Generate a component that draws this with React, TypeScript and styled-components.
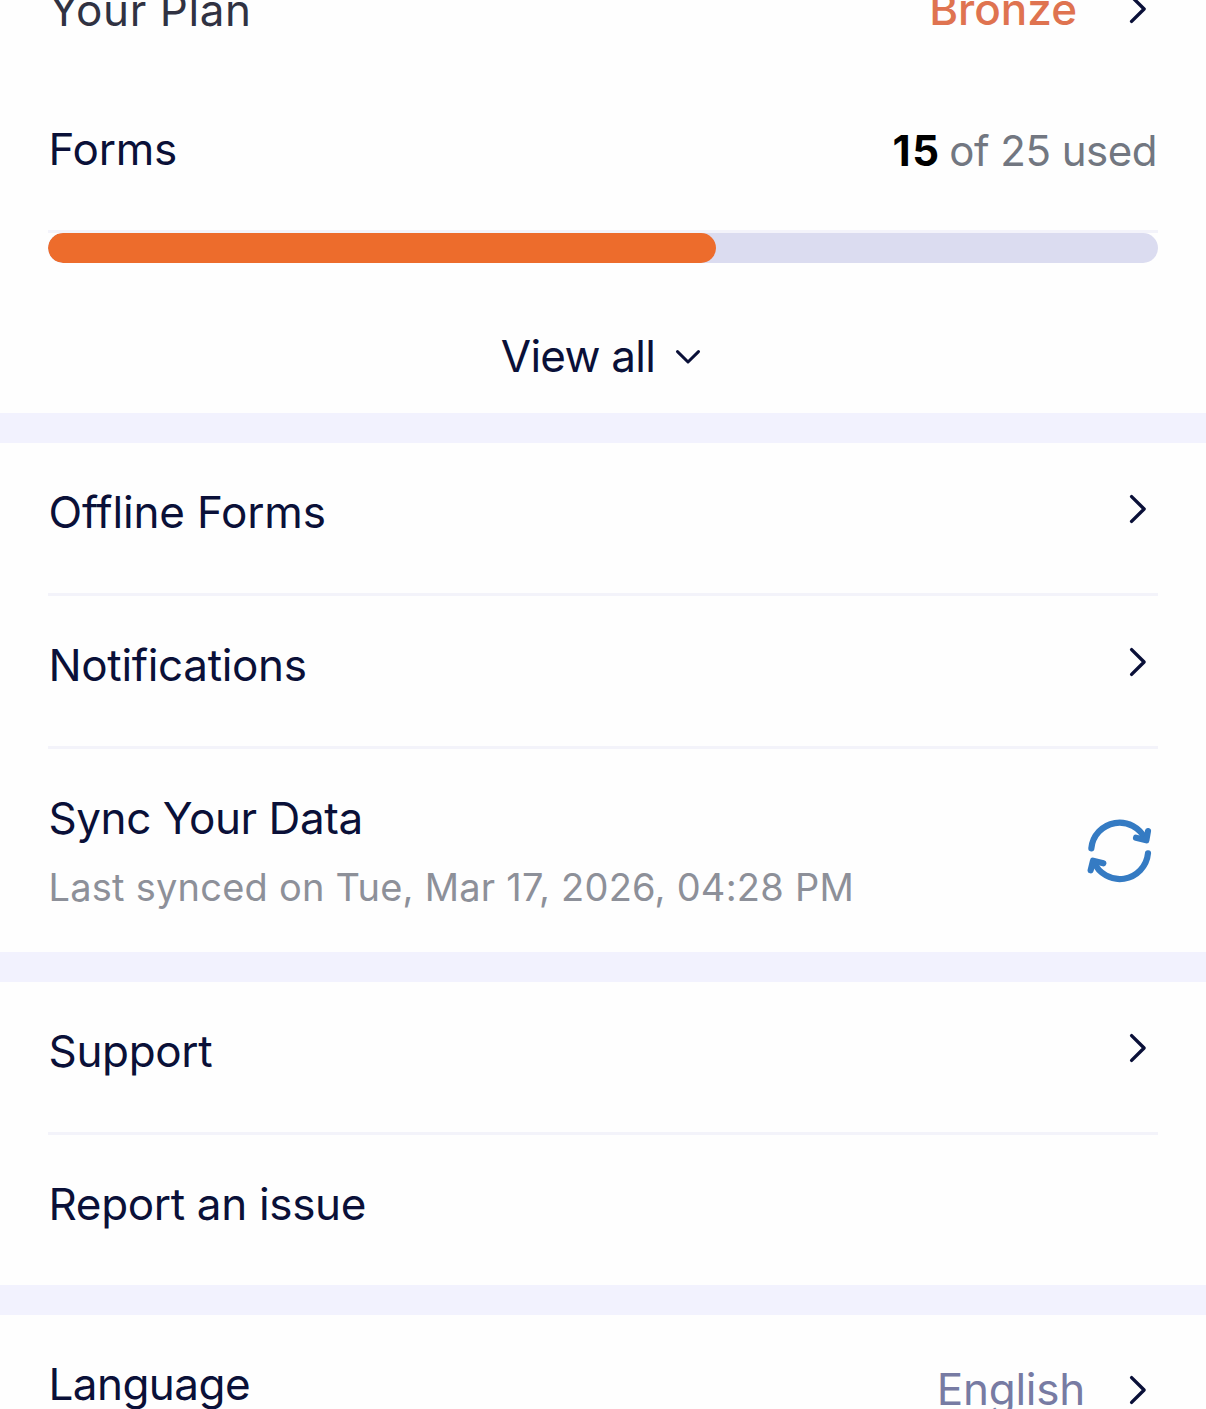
import React from "react";
import styled, { createGlobalStyle } from "styled-components";

const GlobalStyle = createGlobalStyle`
  * { box-sizing: border-box; }
  html, body { margin: 0; background: #fefefe; overflow: hidden; }
`;

const Page = styled.main`
  display: flex;
  flex-direction: column;
  width: 1206px;
  height: 1409px;
  overflow: hidden;
  background: #fefefe;
  font-family: Inter, "Liberation Sans", sans-serif;
  color: #0a1038;
`;

const Section = styled.section`
  flex: none;
  padding: 0 48px;
`;

const Band = styled.div`
  flex: none;
  height: 30px;
  background: #f2f2fe;
`;

const Divider = styled.hr`
  height: 3px;
  margin: 0;
  border: 0;
  background: #f3f3fa;
`;

const Row = styled.div`
  display: flex;
  align-items: center;
  justify-content: space-between;
  height: 150px;
  padding: 0 0 12px 0.5px;
`;

const PlanRow = styled(Row)`
  align-items: flex-start;
  height: 80px;
  padding: 0 0 0 1px;
`;

const SyncRow = styled(Row)`
  height: 203px;
  padding: 42px 6.5px 42px 0.5px;
`;

const Label = styled.span<{ $spacing?: number; $color?: string }>`
  display: block;
  font-size: 44px;
  line-height: 54px;
  letter-spacing: ${(p) => p.$spacing ?? -0.33}px;
  color: ${(p) => p.$color ?? "inherit"};
  white-space: nowrap;
`;

const PlanLabel = styled(Label)`
  margin-top: -17px;
`;

const Caption = styled.span`
  display: block;
  margin-top: 18px;
  font-size: 38px;
  line-height: 48px;
  letter-spacing: 0.23px;
  color: #8d9099;
  white-space: nowrap;
`;

const Trailing = styled.div<{ $gap?: number; $top?: number }>`
  display: flex;
  align-items: center;
  gap: ${(p) => p.$gap ?? 0}px;
  margin-top: ${(p) => p.$top ?? 0}px;
  padding-right: 11px;
`;

const Value = styled(Label)<{ $weight?: number; $lift?: number }>`
  font-weight: ${(p) => p.$weight ?? 400};
  margin-top: -${(p) => p.$lift ?? 0}px;
`;

const Usage = styled.span`
  padding: 3px 1px 0 0;
  font-size: 42px;
  line-height: 54px;
  letter-spacing: -0.5px;
  color: #727781;
  white-space: nowrap;
`;

const Used = styled.strong`
  margin-right: -3px;
  font-weight: 700;
  letter-spacing: 1.8px;
  color: #000;
`;

const Track = styled.div`
  height: 30px;
  border-radius: 15px;
  background: #dbdcf0;
  overflow: hidden;
`;

const Fill = styled.div`
  height: 100%;
  border-radius: 15px;
  background: #ed6c2c;
`;

const ViewAll = styled.div`
  display: flex;
  align-items: center;
  justify-content: center;
  gap: 20px;
  height: 150px;
  padding: 36px 4px 0 0;
`;

const Icon = styled.svg`
  display: block;
  flex: none;
  fill: none;
  stroke: currentColor;
  stroke-linecap: round;
  stroke-linejoin: round;
`;

const ChevronRight = () => (
  <Icon width="18" height="30" viewBox="0 0 18 30" strokeWidth="3.4">
    <path d="M2.6 2.6 15.1 15 2.6 27.4" />
  </Icon>
);

const ChevronDown = () => (
  <Icon width="26" height="18" viewBox="0 0 26 18" strokeWidth="3">
    <path d="M2.5 4.6 13 15 23.5 4.6" />
  </Icon>
);

const SyncIcon = () => (
  <Icon width="65" height="65" viewBox="51 55 195 195" strokeWidth="18.5" color="#357bc3">
    <path d="M64 146A85 85 0 0 1 226 119" />
    <path d="M234 94 229 122 198 114" />
    <path d="M234 161A85 85 0 0 1 71 186" />
    <path d="M62 212 69 183 100 191" />
  </Icon>
);

const used = 15;
const limit = 25;

const LinkRow = ({ text, spacing }: { text: string; spacing?: number }) => (
  <Row>
    <Label $spacing={spacing}>{text}</Label>
    <Trailing $top={-6}>
      <ChevronRight />
    </Trailing>
  </Row>
);

export default function App() {
  return (
    <Page>
      <GlobalStyle />
      <Section>
        <PlanRow>
          <PlanLabel $spacing={0.6} $color="#303242">Your Plan</PlanLabel>
          <Trailing $gap={52} $top={-18}>
            <Value $weight={500} $spacing={0} $color="#df7350">Bronze</Value>
            <ChevronRight />
          </Trailing>
        </PlanRow>
        <Row>
          <Label $spacing={-0.2}>Forms</Label>
          <Usage>
            <Used>{used}</Used> of {limit} used
          </Usage>
        </Row>
        <Divider />
        <Track>
          <Fill style={{ width: `${(used / limit) * 100 + 0.2}%` }} />
        </Track>
        <ViewAll>
          <Label $spacing={-0.75}>View all</Label>
          <ChevronDown />
        </ViewAll>
      </Section>
      <Band />
      <Section>
        <LinkRow text="Offline Forms" spacing={-0.17} />
        <Divider />
        <LinkRow text="Notifications" />
        <Divider />
        <SyncRow>
          <div>
            <Label $spacing={-0.42}>Sync Your Data</Label>
            <Caption>Last synced on Tue, Mar 17, 2026, 04:28 PM</Caption>
          </div>
          <SyncIcon />
        </SyncRow>
      </Section>
      <Band />
      <Section>
        <LinkRow text="Support" />
        <Divider />
        <Row>
          <Label>Report an issue</Label>
        </Row>
      </Section>
      <Band />
      <Section>
        <Row>
          <Label $spacing={-0.55}>Language</Label>
          <Trailing $gap={44} $top={12}>
            <Value $lift={2} $spacing={-0.25} $color="#777ba3">English</Value>
            <ChevronRight />
          </Trailing>
        </Row>
      </Section>
    </Page>
  );
}
